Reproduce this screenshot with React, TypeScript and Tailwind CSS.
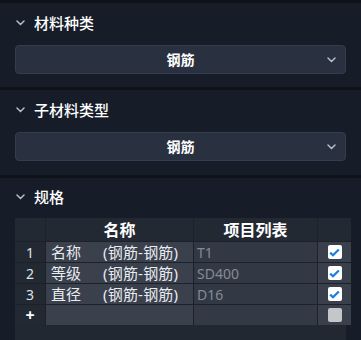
import React from "react";

const Chevron = ({ className = "" }: { className?: string }) => (
  <svg width="9" height="6" viewBox="0 0 9 6" className={className}>
    <path d="M1 1 L4.5 4.5 L8 1" fill="none" stroke="#b8bec8" strokeWidth="1.5" strokeLinecap="round" />
  </svg>
);

const Check = ({ on }: { on: boolean }) =>
  on ? (
    <div className="w-[14px] h-[14px] bg-white rounded-[2px] flex items-center justify-center">
      <svg width="11" height="9" viewBox="0 0 11 9">
        <path d="M1.2 4.6 L4 7.3 L9.8 1.4" fill="none" stroke="#1a7fe0" strokeWidth="2.2" />
      </svg>
    </div>
  ) : (
    <div className="w-[14px] h-[14px] bg-[#c4c6ca] rounded-[2px]" />
  );

const Section = ({ title, value }: { title: string; value: string }) => (
  <div className="px-[15px]">
    <div className="h-[40px] flex items-center">
      <Chevron className="ml-[1px]" />
      <span className="ml-[9px] text-[15px] text-white font-medium">{title}</span>
    </div>
    <div className="mt-[2px] h-[29px] rounded-[4px] bg-[#293140] border border-[#343d4c] relative flex items-center justify-center">
      <span className="text-[14px] text-white font-bold">{value}</span>
      <Chevron className="absolute right-[9px] top-[11px]" />
    </div>
  </div>
);

const rows = [
  { n: "1", a: "名称", v: "T1", on: true },
  { n: "2", a: "等级", v: "SD400", on: true },
  { n: "3", a: "直径", v: "D16", on: true },
];

export default function App() {
  return (
    <div
      className="w-[361px] h-[340px] bg-[#161d29] overflow-hidden flex flex-col"
      style={{ fontFamily: '"Noto Sans", "Noto Sans CJK SC", sans-serif' }}
    >
      <div className="h-[3px] bg-[#0e1219] shrink-0" />
      <Section title="材料种类" value="钢筋" />
      <div className="h-[13px] shrink-0" />
      <div className="h-[3px] bg-[#0e1219] shrink-0" />
      <Section title="子材料类型" value="钢筋" />
      <div className="h-[14px] shrink-0" />
      <div className="h-[3px] bg-[#0e1219] shrink-0" />
      <div className="px-[15px] flex-1 flex flex-col">
        <div className="h-[38px] flex items-center shrink-0">
          <Chevron className="ml-[1px]" />
          <span className="ml-[9px] text-[15px] text-white font-medium">规格</span>
        </div>
        <div className="mt-[2px] flex-1 bg-[#222832]">
          <div className="grid grid-cols-[30px_147px_123px_33px] grid-rows-[23px_20px_20px_20px_20px] gap-[1px] bg-[#1c212a]">
            <div className="bg-[#232933]" />
            <div className="bg-[#232933] flex items-center justify-center text-[16px] font-bold text-white">名称</div>
            <div className="bg-[#232933] flex items-center justify-center text-[16px] font-bold text-white">项目列表</div>
            <div className="bg-[#232933]" />
            {rows.map((r) => (
              <React.Fragment key={r.n}>
                <div className="bg-[#232933] flex items-center justify-center text-[14px] text-[#dfe3ea]">{r.n}</div>
                <div className="bg-[#3a414d] flex items-center pl-[5px] text-[15px] text-[#e8ebf0] whitespace-pre">
                  <span className="w-[52px]">{r.a}</span>
                  <span className="tracking-[0.2px]">(钢筋-钢筋)</span>
                </div>
                <div className="bg-[#323844] flex items-center pl-[3px] text-[14px] text-[#858b95]">{r.v}</div>
                <div className="bg-[#3a404b] flex items-center justify-center">
                  <Check on={r.on} />
                </div>
              </React.Fragment>
            ))}
            <div className="bg-[#232933] flex items-center justify-center text-[16px] font-bold text-white leading-none">+</div>
            <div className="bg-[#3b414c]" />
            <div className="bg-[#343a45]" />
            <div className="bg-[#3a404b] flex items-center justify-center">
              <Check on={false} />
            </div>
          </div>
        </div>
      </div>
    </div>
  );
}
